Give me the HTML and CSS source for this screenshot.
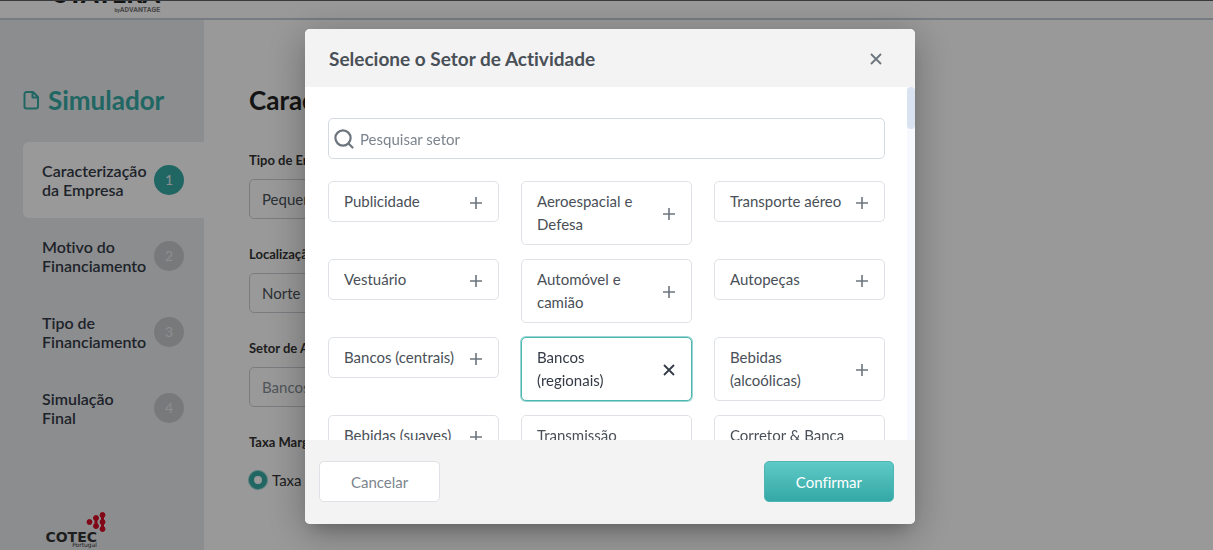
FILE: index.html
```html
<!DOCTYPE html>
<html lang="pt">
<head>
<meta charset="utf-8">
<meta name="viewport" content="width=device-width, initial-scale=1">
<title>Simulador</title>
<link rel="stylesheet" href="styles.css">
</head>
<body>
<svg class="sprite" aria-hidden="true">
  <symbol id="plus" viewBox="0 0 14 14"><path d="M7 1v12M1 7h12" fill="none" stroke="currentColor" stroke-width="1.600"/></symbol>
  <symbol id="cross" viewBox="0 0 14 14"><path d="M2 2l10 10M12 2L2 12" fill="none" stroke="currentColor" stroke-width="1.800"/></symbol>
</svg>
<div class="page">
  <header class="topbar">
    <div class="brand">
      <span class="brand-name">STATERA</span>
      <span class="brand-by"><small>by</small>ADVANTAGE</span>
    </div>
  </header>
  <div class="layout">
    <nav class="sidebar">
      <h2 class="sidebar-title">
        <svg class="file-icon" viewBox="0 0 16 20" fill="none" stroke="currentColor" stroke-width="2" stroke-linejoin="round" aria-hidden="true"><path d="M3.500 2H10l5 5v9.500a2 2 0 0 1-2 2H3.500a2 2 0 0 1-2-2V4a2 2 0 0 1 2-2M9.500 2v5.500h5"/></svg>
        Simulador
      </h2>
      <ol class="steps">
        <li class="step step-active"><span class="step-name">Caracterização da Empresa</span><span class="step-number">1</span></li>
        <li class="step"><span class="step-name">Motivo do Financiamento</span><span class="step-number">2</span></li>
        <li class="step"><span class="step-name">Tipo de Financiamento</span><span class="step-number">3</span></li>
        <li class="step"><span class="step-name">Simulação Final</span><span class="step-number">4</span></li>
      </ol>
      <div class="partner">
        <svg class="partner-dots" viewBox="0 0 20 20" fill="#d90d26" stroke="#d90d26" aria-hidden="true"><circle cx="3.500" cy="10" r="2.500"/><path d="M10 6v8M16.500 3v14" stroke-width="3"/><circle cx="10" cy="6" r="2.500"/><circle cx="10" cy="14" r="2.500"/><circle cx="16.500" cy="3" r="2.500"/><circle cx="16.500" cy="10" r="2.500"/><circle cx="16.500" cy="17" r="2.500"/></svg>
        <span class="partner-name">COTEC</span>
        <span class="partner-country">Portugal</span>
      </div>
    </nav>
    <main class="content">
      <h1 class="content-title">Carac</h1>
      <form class="form">
        <label class="field-label" for="size">Tipo de Em</label>
        <select class="field" id="size"><option>Pequena</option></select>
        <label class="field-label" for="place">Localização</label>
        <select class="field" id="place"><option>Norte</option></select>
        <label class="field-label" for="sector">Setor de A</label>
        <input class="field" id="sector" type="text" placeholder="Bancos">
        <span class="field-label">Taxa Marg</span>
        <label class="radio"><input class="radio-input" type="radio" name="rate" checked>Taxa</label>
      </form>
    </main>
  </div>
</div>
<div class="overlay">
  <section class="modal" role="dialog" aria-modal="true" aria-labelledby="modal-title">
    <header class="modal-header">
      <h2 class="modal-title" id="modal-title">Selecione o Setor de Actividade</h2>
      <button class="close" type="button" aria-label="Fechar"><svg class="icon-close"><use href="#cross"/></svg></button>
    </header>
    <div class="modal-body">
      <div class="search">
        <svg class="search-icon" viewBox="0 0 20 20" fill="none" stroke="currentColor" stroke-width="2.200" aria-hidden="true"><circle cx="9" cy="9" r="7.600"/><path d="M14.500 14.500l4 4" stroke-linecap="round"/></svg>
        <input class="search-input" type="text" placeholder="Pesquisar setor" aria-label="Pesquisar setor">
      </div>
      <div class="sectors">
        <button class="sector" type="button"><span>Publicidade</span><svg class="icon"><use href="#plus"/></svg></button>
        <button class="sector" type="button"><span>Aeroespacial e Defesa</span><svg class="icon"><use href="#plus"/></svg></button>
        <button class="sector" type="button"><span>Transporte aéreo</span><svg class="icon"><use href="#plus"/></svg></button>
        <button class="sector" type="button"><span>Vestuário</span><svg class="icon"><use href="#plus"/></svg></button>
        <button class="sector" type="button"><span>Automóvel e camião</span><svg class="icon"><use href="#plus"/></svg></button>
        <button class="sector" type="button"><span>Autopeças</span><svg class="icon"><use href="#plus"/></svg></button>
        <button class="sector" type="button"><span>Bancos (centrais)</span><svg class="icon"><use href="#plus"/></svg></button>
        <button class="sector sector-selected" type="button" aria-pressed="true"><span>Bancos (regionais)</span><svg class="icon"><use href="#cross"/></svg></button>
        <button class="sector" type="button"><span>Bebidas (alcoólicas)</span><svg class="icon"><use href="#plus"/></svg></button>
        <button class="sector" type="button"><span>Bebidas (suaves)</span><svg class="icon"><use href="#plus"/></svg></button>
        <button class="sector sector-tall" type="button"><span>Transmissão</span></button>
        <button class="sector sector-tall" type="button"><span>Corretor &amp; Banca</span></button>
      </div>
      <div class="scrollbar" aria-hidden="true"><div class="scrollbar-thumb"></div></div>
    </div>
    <footer class="modal-footer">
      <button class="button button-plain" type="button">Cancelar</button>
      <button class="button button-primary" type="button">Confirmar</button>
    </footer>
  </section>
</div>
</body>
</html>
```

FILE: styles.css
```css
* { box-sizing: border-box; }

body {
  margin: 0;
  height: 100vh;
  overflow: hidden;
  font-family: Lato, "Open Sans", sans-serif;
  font-size: 15px;
  font-variant-ligatures: none;
  color: #495057;
  background: #fff;
}

button, input, select { font: inherit; font-variant-ligatures: none; color: inherit; }
.sprite { display: none; }

.page { display: flex; flex-direction: column; height: 100vh; }

.topbar {
  display: flex;
  flex: none;
  align-items: flex-end;
  height: 20px;
  padding: 0 54px 3px;
  overflow: hidden;
  border-top: 1px solid #5d6368;
  border-bottom: 2px solid #c4ced6;
}

.brand { display: flex; flex-direction: column; align-items: flex-end; }
.brand-name { font-size: 25px; line-height: 23px; font-weight: 900; color: #222; }
.brand-by { font: 700 7px/10px Roboto, sans-serif; color: #777; }
.brand-by small { font-size: 5px; vertical-align: top; }

.layout { display: flex; flex: 1; min-height: 0; }

.sidebar {
  display: flex;
  flex-direction: column;
  flex: 0 0 204px;
  padding: 64px 0 2px 23px;
  background: #e9ecef;
}

.sidebar-title {
  display: flex;
  align-items: center;
  gap: 9px;
  margin: 0 0 26px;
  font-size: 26px;
  line-height: 32px;
  color: #36aaa6;
}
.file-icon { width: 16px; height: 20px; }

.steps { margin: 0; padding: 0; list-style: none; }
.step {
  display: flex;
  align-items: center;
  justify-content: space-between;
  height: 76px;
  padding: 0 20px 0 19px;
  border-radius: 6px 0 0 6px;
}
.step-active { background: #fff; }
.step-name { width: 106px; font-size: 16px; line-height: 19px; font-weight: 600; color: #343a46; }
.step-number {
  width: 30px;
  border-radius: 50%;
  font-size: 14px;
  line-height: 30px;
  text-align: center;
  color: #e9ecef;
  background: #c8cace;
}
.step-active .step-number { background: #36aaa6; }

.partner {
  display: grid;
  justify-items: end;
  width: 83px;
  margin-top: auto;
}
.partner-dots { width: 20px; height: 20px; }
.partner-name { margin-right: 9px; font: 700 14px/10px "DejaVu Sans", sans-serif; color: #333; }
.partner-country { margin-right: 9px; font: 400 6px/6px "DejaVu Sans", sans-serif; color: #333; }

.content { flex: 1; padding: 64px 45px 0; }
.content-title { margin: 0 0 35px; font-size: 26px; line-height: 32px; color: #222; }
.form { display: flex; flex-direction: column; align-items: flex-start; }
.field-label { margin-bottom: 10px; font-size: 13px; line-height: 18px; font-weight: 700; color: #333; }
.field {
  width: 400px;
  height: 40px;
  margin-bottom: 26px;
  padding: 0 12px;
  border: 1px solid #cbd0d6;
  border-radius: 5px;
  background: #fff;
  appearance: none;
}
.field::placeholder { color: #868e96; opacity: 1; }
.radio { display: flex; align-items: center; gap: 5px; margin-top: 8px; line-height: 22px; color: #333; }
.radio-input {
  width: 18px;
  height: 18px;
  margin: 0;
  border: 5px solid #36aaa6;
  border-radius: 50%;
  background: #fff;
  box-shadow: 0 0 0 1px #8fcfcc;
  appearance: none;
}

.overlay {
  position: fixed;
  inset: 0;
  display: flex;
  justify-content: center;
  padding: 29px 0 26px;
  background: rgba(0, 0, 0, 0.4);
}

.modal {
  display: flex;
  flex-direction: column;
  width: 50%;
  min-width: 610px;
  margin-left: 7px;
  overflow: hidden;
  border-radius: 5px;
  background: #fff;
  box-shadow: 0 11px 15px -7px rgba(0, 0, 0, 0.2), 0 8px 38px 3px rgba(0, 0, 0, 0.26);
}

.modal-header {
  display: flex;
  align-items: center;
  justify-content: space-between;
  padding: 16px 32px 15px 24px;
  background: #f3f3f3;
}
.modal-title { margin: 0; font-size: 19px; line-height: 27px; }
.close { display: flex; padding: 0; border: 0; background: none; color: #6c757d; }
.icon-close { width: 14px; height: 14px; }

.modal-body { position: relative; flex: 1; min-height: 0; padding: 31px 30px 0 23px; overflow: hidden; }
.search {
  display: flex;
  align-items: center;
  gap: 6px;
  height: 41px;
  margin-bottom: 22px;
  padding: 0 5px;
  border: 1px solid #d5dae0;
  border-radius: 5px;
  color: #6c757d;
}
.search-icon { width: 20px; height: 20px; }
.search-input { flex: 1; padding: 0; border: 0; outline: 0; background: none; }
.search-input::placeholder { color: #7c858d; opacity: 1; }

.sectors { display: grid; grid-template-columns: repeat(3, 1fr); align-items: start; gap: 14px 22px; }
.sector {
  display: flex;
  align-items: center;
  justify-content: space-between;
  gap: 8px;
  min-height: 41px;
  padding: 8px 15px;
  border: 1px solid #dee2e6;
  border-radius: 5px;
  line-height: 23px;
  text-align: left;
  background: #fff;
}
.sector-tall { min-height: 64px; align-items: flex-start; }
.sector-selected { border-color: #4db6b2; box-shadow: 0 0 0 1px #9ad6d3; color: #343a46; }
.icon { flex: none; width: 14px; height: 14px; margin-top: 2px; color: #6c757d; }
.sector-selected .icon { color: #343a46; }

.scrollbar { position: absolute; top: 0; right: 0; bottom: 0; width: 8px; background: #f8f9ff; }
.scrollbar-thumb { height: 42px; border-radius: 4px; background: #d9e2f1; }

.modal-footer {
  display: flex;
  justify-content: space-between;
  padding: 21px 21px 22px 14px;
  background: #f3f3f3;
}
.button { height: 41px; padding: 0 31px; border: 1px solid #dee2e6; border-radius: 5px; }
.button-plain { color: #7c858d; background: #fff; }
.button-primary { border-color: #4db6b2; color: #fff; background: linear-gradient(#5fcac7, #34a8a5); }
```
